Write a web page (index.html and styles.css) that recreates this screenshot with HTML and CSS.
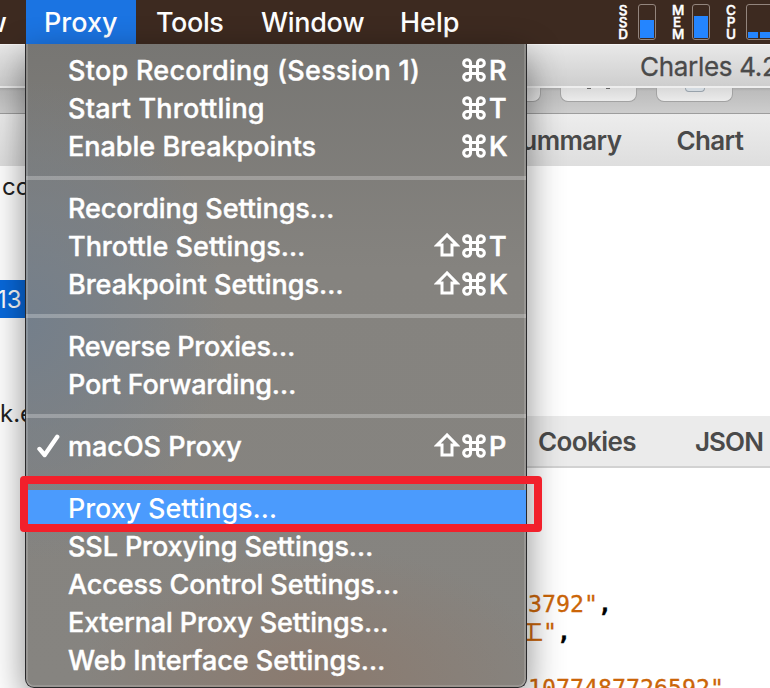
FILE: index.html
```html
<!DOCTYPE html>
<html lang="en">
<head>
<meta charset="utf-8">
<title>Charles</title>
<link rel="stylesheet" href="styles.css">
</head>
<body>
<svg class="defs" aria-hidden="true">
  <symbol id="cmd" viewBox="0 0 24 24"><path d="M8.5 8.5h7v7h-7zM8.5 8.5H5.4a3.4 3.4 0 1 1 3.1-3.4zM15.5 8.5V5.1a3.4 3.4 0 1 1 3.1 3.4zM15.5 15.5h3.1a3.4 3.4 0 1 1-3.1 3.4zM8.5 15.5v3.4a3.4 3.4 0 1 1-3.1-3.4z"/></symbol>
  <symbol id="shift" viewBox="0 0 26 26"><path d="M13 3L3.2 13H8v10h10V13h4.8z"/></symbol>
</svg>
<header class="menubar">
  <span class="view">w</span>
  <span class="menu-title active">Proxy</span>
  <span class="menu-title tools">Tools</span>
  <span class="menu-title window">Window</span>
  <span class="menu-title help">Help</span>
  <div class="meters">
    <div class="label"><span>S</span><span>S</span><span>D</span></div>
    <div class="meter ssd"><i></i></div>
    <div class="label"><span>M</span><span>E</span><span>M</span></div>
    <div class="meter mem"><i></i></div>
    <div class="label"><span>C</span><span>P</span><span>U</span></div>
    <div class="meter cpu"><i></i><i></i></div>
  </div>
</header>
<main class="app">
  <div class="titlebar">Charles 4.2</div>
  <div class="toolbar"><span class="button"></span><span class="button tools-icon"><b></b><b></b></span><span class="button gear"><b></b></span></div>
  <div class="panes">
    <aside class="sidebar">
      <div class="side-tabs"></div>
      <div class="host one">co</div>
      <div class="host selected">13</div>
      <div class="host two">k.e</div>
    </aside>
    <section class="detail">
      <nav class="tabs"><span>Summary</span><span>Chart</span></nav>
      <div class="request"></div>
      <nav class="tabs lower"><span>Cookies</span><span>JSON</span></nav>
      <pre class="code"><span>3792"</span><b>,</b>
<span><em>工</em>"</span><b>,</b>

<span><s>"</s>1077487726592"</span></pre>
    </section>
  </div>
</main>
<div class="menu">
  <div class="item"><span class="l1">Stop Recording (Session 1)</span><kbd><svg class="cmd"><use href="#cmd"/></svg><i>R</i></kbd></div>
  <div class="item"><span class="l2">Start Throttling</span><kbd><svg class="cmd"><use href="#cmd"/></svg><i>T</i></kbd></div>
  <div class="item"><span class="l3">Enable Breakpoints</span><kbd><svg class="cmd"><use href="#cmd"/></svg><i>K</i></kbd></div>
  <div class="separator"></div>
  <div class="item"><span class="l4">Recording Settings…</span></div>
  <div class="item"><span class="l5">Throttle Settings…</span><kbd><svg class="shift"><use href="#shift"/></svg><svg class="cmd"><use href="#cmd"/></svg><i>T</i></kbd></div>
  <div class="item"><span class="l6">Breakpoint Settings…</span><kbd><svg class="shift"><use href="#shift"/></svg><svg class="cmd"><use href="#cmd"/></svg><i>K</i></kbd></div>
  <div class="separator"></div>
  <div class="item"><span class="l7">Reverse Proxies…</span></div>
  <div class="item"><span class="l8">Port Forwarding…</span></div>
  <div class="separator"></div>
  <div class="item checked"><svg class="check" viewBox="0 0 24 24"><path d="M3.2 13.8L8 19.4 19.6 2.6"/></svg><span class="l9">macOS Proxy</span><kbd><svg class="shift"><use href="#shift"/></svg><svg class="cmd"><use href="#cmd"/></svg><i>P</i></kbd></div>
  <div class="separator"></div>
  <div class="item highlighted"><span class="l10">Proxy Settings…</span></div>
  <div class="item"><span class="l11">SSL Proxying Settings…</span></div>
  <div class="item"><span class="l12">Access Control Settings…</span></div>
  <div class="item"><span class="l13">External Proxy Settings…</span></div>
  <div class="item"><span class="l14">Web Interface Settings…</span></div>
</div>
<div class="callout"></div>
</body>
</html>
```

FILE: styles.css
```css
* { box-sizing: border-box; }
body { margin: 0; width: 770px; height: 688px; overflow: hidden; position: relative; background: #fff; font-family: Inter, "Liberation Sans", sans-serif; }
.defs { position: absolute; width: 0; height: 0; }

.menubar { display: flex; height: 44px; background: #3d2a20; color: #fff; font-size: 27px; font-weight: 500; line-height: 46px; white-space: nowrap; overflow: hidden; }
.view { width: 26px; flex: none; display: flex; justify-content: flex-end; padding-right: 19px; }
.menu-title { flex: none; }
.active { width: 110px; padding-left: 18px; background: #1b74e2; }
.tools { width: 105px; padding-left: 20px; letter-spacing: -.4px; }
.window { width: 140px; padding-left: 20px; letter-spacing: -.3px; }
.help { width: 237px; padding-left: 19px; }
.meters { display: flex; flex: none; padding-top: 4px; }
.label { width: 20px; font: 500 13.5px/12px Inter, sans-serif; -webkit-text-stroke: .5px #fff; display: flex; flex-direction: column; }
.label span { width: 10px; text-align: center; }
.meter { width: 18px; height: 36px; border: 1.5px solid #93857d; border-radius: 3px; margin-right: 16px; display: flex; align-items: flex-end; padding: 1px; }
.meter i { flex: 1; background: #2485ff; }
.ssd i { height: 18px; }
.mem i { height: 22px; }
.cpu { width: 40px; gap: 2px; margin-right: 0; }
.cpu i { flex: none; width: 10px; height: 6px; }

.app { height: 644px; display: flex; flex-direction: column; }
.titlebar { height: 44px; flex: none; background: linear-gradient(#e8e8e8, #cecece); border-top: 1px solid #f5f5f5; border-bottom: 2px solid #eee; color: #4a4a4a; font-size: 26px; line-height: 44px; padding-left: 640px; white-space: nowrap; letter-spacing: -.3px; -webkit-text-stroke: .3px #4a4a4a; }
.toolbar { height: 26px; flex: none; border-bottom: 1px solid #9d9d9d; background: linear-gradient(#a9a9a9, #bcbcbc 3px, #cdcdcd); display: flex; padding-left: 464px; gap: 19px; }
.button { width: 77px; height: 14px; flex: none; border: 1px solid #a2a2a2; border-top: 0; border-radius: 0 0 8px 8px; background: linear-gradient(#d9d9d9, #ebebeb); display: flex; justify-content: center; }
.tools-icon { gap: 15px; }
.tools-icon b { width: 4px; height: 1px; background: #666; }
.gear b { width: 20px; height: 4px; border: 1px solid #98a2ab; border-top: 0; border-radius: 0 0 4px 4px; background: #d3dae0; }
.panes { display: flex; flex: 1; min-height: 0; }
.sidebar { width: 40px; flex: none; background: #fff; color: #222; font-size: 24px; line-height: 40px; }
.side-tabs { height: 52px; background: linear-gradient(#ededed, #dedede); }
.host { height: 38px; white-space: nowrap; }
.host.one { margin-top: 1px; padding-left: 2px; }
.selected { margin-top: 75px; background: #0869dc; color: #fff; text-indent: -3px; }
.two { margin-top: 76px; }
.detail { flex: 1; min-width: 0; display: flex; flex-direction: column; }
.tabs { height: 52px; flex: none; background: linear-gradient(#ededed, #dedede); color: #4a4a4a; font-size: 26px; font-weight: 600; line-height: 54px; display: flex; padding-left: 465px; gap: 55px; white-space: nowrap; letter-spacing: -.6px; }
.request { height: 250px; flex: none; }
.lower { background: #ebebeb; border-bottom: 2px solid #d2d2d2; padding-left: 498px; gap: 59px; line-height: 51px; }
.lower span + span { letter-spacing: -.9px; }
.code { margin: 122px 0 0; padding-left: 488px; font: 23.25px/28px "DejaVu Sans Mono", "Noto Sans CJK SC", monospace; color: #cb6508; white-space: pre; -webkit-text-stroke: .3px; }
.code b { color: #000; }
.code em { display: inline-block; font-style: normal; width: 15px; height: 28px; vertical-align: bottom; direction: rtl; }
.code s { text-decoration: none; margin-left: -14px; }

.menu { position: absolute; left: 25px; top: 44px; width: 502px; height: 644px; padding-top: 8px; border: 1px solid #29292b; border-top: 0; border-radius: 0 0 9px 9px; color: #fff; font-size: 27px; font-weight: 500; line-height: 38px; -webkit-text-stroke: .4px #fff; box-shadow: inset 2px 0 #ffffff26, inset -2px 0 #ffffff26, inset 0 -2px #ffffff26, 0 12px 36px #0007;
  background: radial-gradient(ellipse 200px 240px at 0 43%, #747f8b, #747f8b00), radial-gradient(ellipse 240px 140px at 58% 100%, #8b7a6e, #8b7a6e00), linear-gradient(#777673, #85837f 35%, #868480); }
.item { height: 38px; display: flex; padding: 0 15px 0 42px; position: relative; white-space: nowrap; }
.separator { height: 24px; border-top: 10px solid transparent; border-bottom: 10px solid transparent; background: #ffffff40; background-clip: padding-box; }
.highlighted { background: #4b9bfd; -webkit-text-stroke: 0; }
.checked { padding-left: 10px; }
.check { width: 26px; height: 26px; margin: 6px 6px 0 0; fill: none; stroke: #fff; stroke-width: 4; stroke-linecap: round; stroke-linejoin: round; }
.l1 { letter-spacing: .27px; }
.l2 { letter-spacing: .19px; }
.l4, .l11, .l12, .l10 { letter-spacing: -.11px; }
.l6, .l14 { letter-spacing: -.05px; }
.l7 { letter-spacing: -.26px; }
.l8 { letter-spacing: -.2px; }
.l13 { letter-spacing: -.13px; }
kbd { margin-left: auto; display: flex; font: inherit; }
kbd i { font-style: normal; width: 23px; padding-left: 1px; -webkit-text-stroke: .6px #fff; }
.cmd { width: 24px; height: 24px; margin: 6px 2px 0 0; fill: none; stroke: #fff; stroke-width: 3.1; }
.shift { width: 26px; height: 26px; margin: 4px 2px 0 0; fill: none; stroke: #fff; stroke-width: 3; }
.callout { position: absolute; left: 20px; top: 476px; width: 522px; height: 56px; border: 8px solid #f2202b; border-radius: 4px; }
```
